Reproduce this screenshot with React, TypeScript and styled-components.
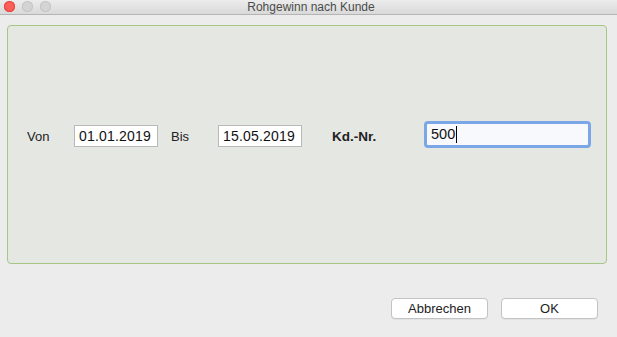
import React from 'react';
import styled, { createGlobalStyle } from 'styled-components';

const GlobalStyle = createGlobalStyle`
  html, body {
    margin: 0;
    padding: 0;
    background: #ececec;
  }
  body {
    font-family: 'Liberation Sans', Arial, sans-serif;
  }
`;

const Window = styled.div`
  width: 617px;
  height: 337px;
  display: flex;
  flex-direction: column;
  background: #ececec;
  overflow: hidden;
`;

const TitleBar = styled.div`
  height: 14px;
  display: flex;
  align-items: center;
  position: relative;
  background: linear-gradient(#ececec, #d9d9d9);
  border-bottom: 1px solid #b4b4b4;
`;

const Lights = styled.div`
  position: absolute;
  left: 4px;
  top: 1px;
  display: flex;
  gap: 7px;
`;

const Light = styled.span<{ $color: string; $edge: string }>`
  width: 11px;
  height: 11px;
  border-radius: 50%;
  background: ${(p) => p.$color};
  box-shadow: inset 0 0 0 1px ${(p) => p.$edge};
`;

const Title = styled.div`
  flex: 1;
  text-align: center;
  font-size: 12px;
  line-height: 14px;
  color: #4b4b4b;
  padding-left: 5px;
`;

const Body = styled.div`
  flex: 1;
  display: flex;
  flex-direction: column;
  padding: 10px 10px 0 7px;
`;

const Panel = styled.div`
  height: 239px;
  border: 1px solid #a6c685;
  border-radius: 4px;
  background: #e5e7e2;
  display: flex;
  align-items: flex-start;
  padding: 95px 0 0 19px;
  box-sizing: border-box;
`;

const Label = styled.span<{ $width: number; $gap?: number; $bold?: boolean }>`
  width: ${(p) => p.$width}px;
  margin-left: ${(p) => p.$gap ?? 0}px;
  font-size: ${(p) => (p.$bold ? 13.5 : 13)}px;
  line-height: 15px;
  margin-top: 8px;
  color: #222;
  font-weight: ${(p) => (p.$bold ? 700 : 400)};
`;

const Field = styled.div`
  width: 84px;
  height: 22px;
  margin-top: 4px;
  box-sizing: border-box;
  border: 1px solid #b8b8b8;
  background: #fff;
  font-size: 14px;
  line-height: 21px;
  padding-left: 4px;
  color: #111;
  letter-spacing: 0.2px;
`;

const FocusField = styled.div`
  width: 167px;
  height: 27px;
  box-sizing: border-box;
  border: 3px solid #7ba7e6;
  border-radius: 4px;
  background: #f7f9fd;
  font-size: 14.5px;
  line-height: 21px;
  padding-left: 4px;
  color: #111;
  display: flex;
  align-items: center;
`;

const Caret = styled.span`
  width: 1px;
  height: 17px;
  background: #000;
  margin-left: 1px;
`;

const Buttons = styled.div`
  display: flex;
  justify-content: flex-end;
  gap: 13px;
  padding: 34px 9px 0 0;
`;

const Button = styled.button`
  width: 97px;
  height: 21px;
  padding: 0;
  border: 1px solid #c3c3c3;
  border-radius: 4px;
  background: #fff;
  font-family: 'Liberation Sans', Arial, sans-serif;
  font-size: 13px;
  color: #222;
  box-shadow: 0 0.5px 0 rgba(0, 0, 0, 0.08);
`;

export default function App() {
  return (
    <>
      <GlobalStyle />
      <Window>
        <TitleBar>
          <Lights>
            <Light $color="#fc5f57" $edge="#e0443e" />
            <Light $color="#d4d4d4" $edge="#c4c4c4" />
            <Light $color="#d4d4d4" $edge="#c4c4c4" />
          </Lights>
          <Title>Rohgewinn nach Kunde</Title>
        </TitleBar>
        <Body>
          <Panel>
            <Label $width={47}>Von</Label>
            <Field>01.01.2019</Field>
            <Label $width={47} $gap={13}>Bis</Label>
            <Field>15.05.2019</Field>
            <Label $width={92} $gap={30} $bold>
              Kd.-Nr.
            </Label>
            <FocusField>
              500
              <Caret />
            </FocusField>
          </Panel>
          <Buttons>
            <Button>Abbrechen</Button>
            <Button>OK</Button>
          </Buttons>
        </Body>
      </Window>
    </>
  );
}
